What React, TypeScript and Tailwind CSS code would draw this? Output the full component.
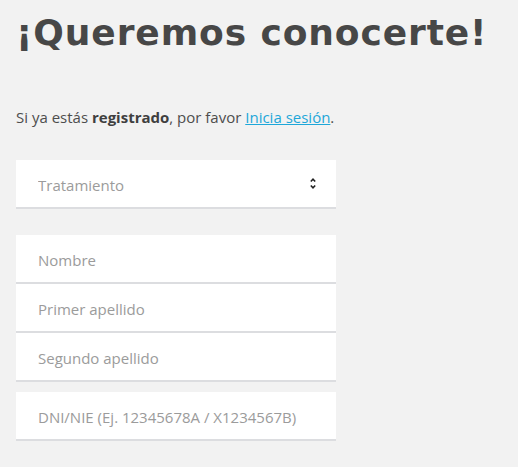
import React from "react";

const fields = ["Nombre", "Primer apellido", "Segundo apellido"];

const inputCls =
  "h-[49px] w-full border-b-2 border-[#dcdde0] bg-white pl-[22px] pt-[3px] text-[15px] text-[#4a4a4a] outline-none placeholder:text-[#9b9b9b]";

const App = () => {
  return (
    <div className="min-h-screen bg-[#f2f2f2] px-4 pt-[11px] font-['Open_Sans',sans-serif]">
      <h1 className="font-['DejaVu_Sans',sans-serif] text-[36px] font-bold leading-[44px] tracking-[0.9px] text-[#474747]">
        ¡Queremos conocerte!
      </h1>

      <p className="mt-[52px] text-[15px] leading-[20px] text-[#4d4d4d]">
        Si ya estás <strong className="font-bold text-[#3f3f3f]">registrado</strong>, por favor{" "}
        <a href="#" className="text-[#1ea7d9] underline">Inicia sesión</a>.
      </p>

      <form className="mt-[33px] w-[320px]">
        <div className="relative">
          <select
            defaultValue=""
            className="h-[49px] w-full appearance-none border-b-2 border-[#dcdde0] bg-white pl-[22px] pt-[3px] text-[15px] text-[#9b9b9b] outline-none"
          >
            <option value="" disabled>Tratamiento</option>
            <option>Sr.</option>
            <option>Sra.</option>
          </select>
          <svg className="pointer-events-none absolute right-[20px] top-[18px]" width="6" height="11" viewBox="0 0 6 11" fill="none" stroke="#222" strokeWidth="1.6">
            <path d="M0.8 3.5 L3 1.2 L5.2 3.5" />
            <path d="M0.8 7.5 L3 9.8 L5.2 7.5" />
          </svg>
        </div>

        <div className="mt-[26px] flex flex-col">
          {fields.map((f) => (
            <input key={f} placeholder={f} className={inputCls} />
          ))}
        </div>

        <input placeholder="DNI/NIE (Ej. 12345678A / X1234567B)" className={`mt-[10px] ${inputCls}`} />
      </form>
    </div>
  );
};

export default App;
